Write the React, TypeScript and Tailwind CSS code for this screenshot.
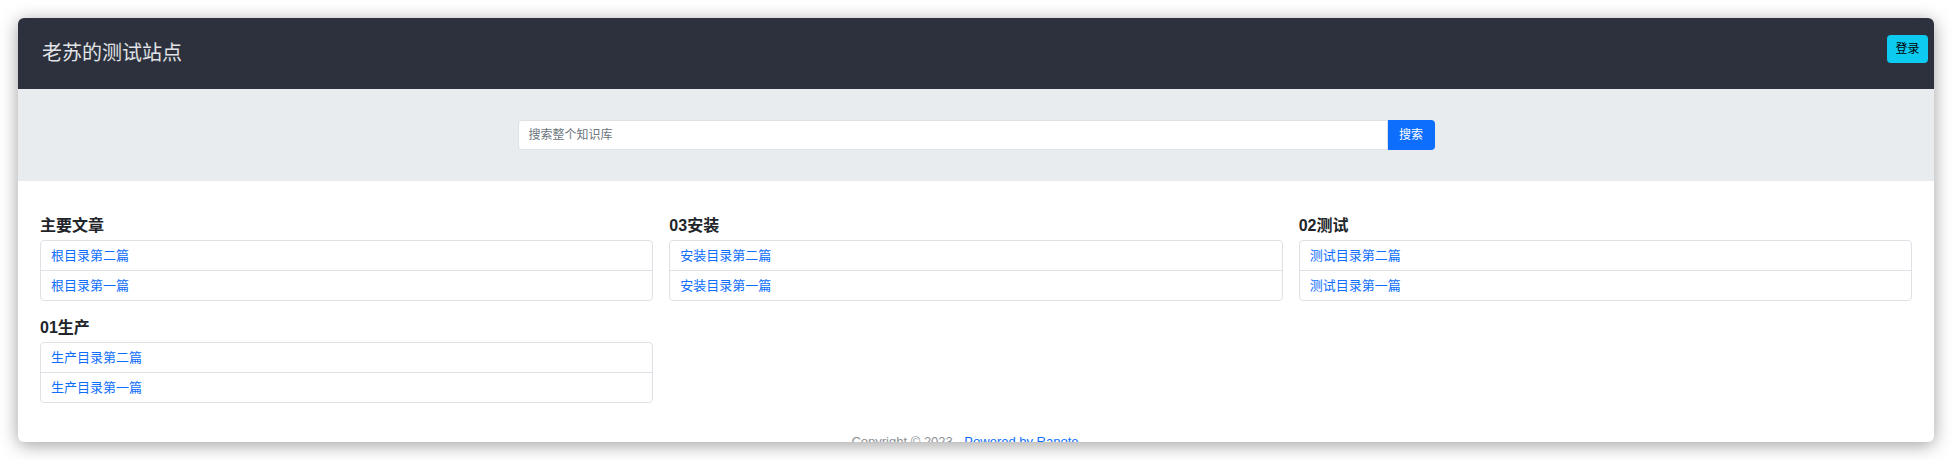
import React from "react";

const sections = [
  { title: "主要文章", items: ["根目录第二篇", "根目录第一篇"] },
  { title: "03安装", items: ["安装目录第二篇", "安装目录第一篇"] },
  { title: "02测试", items: ["测试目录第二篇", "测试目录第一篇"] },
  { title: "01生产", items: ["生产目录第二篇", "生产目录第一篇"] },
];

export default function App() {
  return (
    <div
      className="h-[460px] w-[1952px] overflow-hidden bg-white p-[18px]"
      style={{ fontFamily: '"Liberation Sans", "Noto Sans CJK SC", sans-serif' }}
    >
      <div className="flex h-[424px] w-[1916px] flex-col overflow-hidden rounded-[6px] bg-white shadow-[0_3px_18px_rgba(0,0,0,0.38)]">
        <header className="flex h-[71px] shrink-0 justify-between bg-[#2c313d] pl-[24px] pr-[6px]">
          <div className="flex items-center pb-[2px] text-[20px] text-[#e1e3e7]">老苏的测试站点</div>
          <button className="mt-[17px] h-[28px] w-[41px] rounded-[4px] bg-[#0dcaf0] text-[12px] text-black">
            登录
          </button>
        </header>
        <div className="flex h-[92px] shrink-0 justify-center bg-[#e9ecef] pt-[31px]">
          <div className="flex h-[30px] w-[917px]">
            <div className="flex flex-1 items-center rounded-l-[4px] border border-[#dee2e6] bg-white px-[10px] text-[12px] text-[#6c757d]">
              搜索整个知识库
            </div>
            <button className="h-[30px] w-[47px] rounded-r-[4px] bg-[#0d6efd] text-[12px] text-white">
              搜索
            </button>
          </div>
        </div>
        <main className="px-[22px] pt-[33px]">
          <div className="grid grid-cols-3 gap-x-[16px] gap-y-[15px]">
            {sections.map((s) => (
              <div key={s.title}>
                <h2 className="mb-[2px] text-[16px] font-bold leading-[24px] text-[#212529]">{s.title}</h2>
                <div className="rounded-[4px] border border-[#dee2e6]">
                  {s.items.map((it, i) => (
                    <div
                      key={it}
                      className={
                        i === 0
                          ? "flex h-[30px] items-center border-b border-[#dee2e6] px-[10px] text-[13px] text-[#0d6efd]"
                          : "flex h-[29px] items-center px-[10px] text-[13px] text-[#0d6efd]"
                      }
                    >
                      {it}
                    </div>
                  ))}
                </div>
              </div>
            ))}
          </div>
          <div className="mt-[29px] pr-[22px] text-center text-[13px] leading-[20px] text-[#8a9096]">
            Copyright © 2023 - <span className="text-[#0d6efd]">Powered by Ranote</span>
          </div>
        </main>
      </div>
    </div>
  );
}
